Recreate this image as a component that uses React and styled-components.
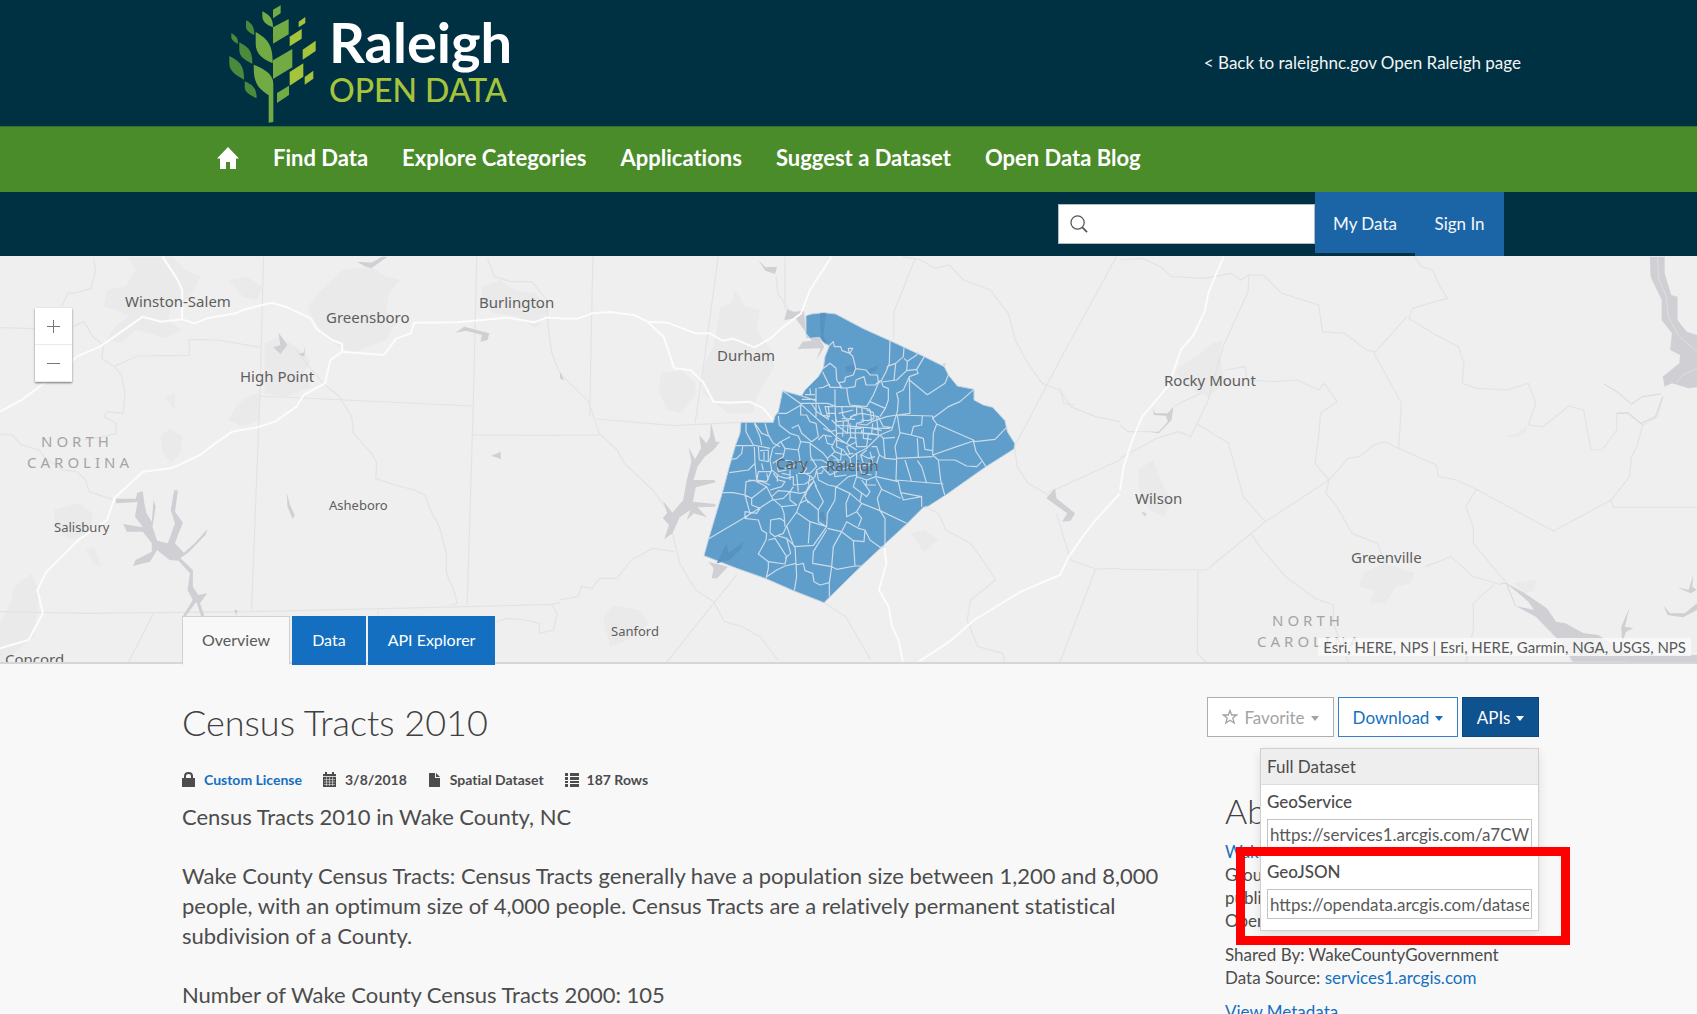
import React from "react";
import styled, { createGlobalStyle } from "styled-components";

const GlobalStyle = createGlobalStyle`
  *, *::before, *::after { box-sizing: border-box; }
  html, body { margin: 0; padding: 0; }
  body {
    background: #f8f8f8;
    color: #4c4c4c;
    font-family: Lato, "Open Sans", sans-serif;
    font-size: 16px;
    font-variant-ligatures: none;
    overflow: hidden;
  }
  a { color: #146fc0; text-decoration: none; }
  button, input { font-family: inherit; }
`;

const Page = styled.div`
  display: flex;
  flex-direction: column;
  height: 100vh;
  overflow: hidden;
`;

/* ---------- header ---------- */

const Brand = styled.header`
  display: flex;
  flex: none;
  align-items: center;
  justify-content: space-between;
  height: 126px;
  padding: 0 176px 0 228px;
  background: #003142;
`;

const LogoLink = styled.a`
  display: flex;
  gap: 12px;
  color: #fff;
`;

const LogoWords = styled.span`
  display: flex;
  flex-direction: column;
  padding-top: 8px;
`;

const LogoName = styled.span`
  font-size: 56px;
  font-weight: 700;
  line-height: 68px;
`;

const LogoTag = styled.span`
  color: #a6c33c;
  font-size: 32px;
  font-weight: 500;
  line-height: 28px;
`;

const BackLink = styled.a`
  padding-bottom: 2px;
  color: #f2f5f6;
  font-size: 17px;
`;

const MainNav = styled.nav`
  display: flex;
  flex: none;
  align-items: center;
  gap: 34px;
  height: 66px;
  padding: 0 217px 4px;
  background: #4a8c2a;
  border-top: 1px solid #2f7038;
`;

const NavLink = styled.a`
  display: flex;
  color: #fff;
  font-size: 22px;
  font-weight: 700;
`;

const Tools = styled.div`
  display: flex;
  flex: none;
  align-items: flex-start;
  justify-content: flex-end;
  height: 64px;
  padding-right: 193px;
  background: #003142;
`;

const SearchBox = styled.label`
  display: flex;
  align-items: center;
  gap: 8px;
  width: 257px;
  height: 40px;
  margin-top: 12px;
  padding-left: 11px;
  background: #fff;
  border: 1px solid #b3bcc0;
`;

const SearchInput = styled.input`
  flex: 1;
  min-width: 0;
  border: 0;
  outline: 0;
  background: transparent;
  font-size: 16px;
`;

const ToolLink = styled.a`
  display: flex;
  justify-content: center;
  width: ${(p) => p.$width}px;
  height: ${(p) => p.$height}px;
  background: #1b65a6;
  color: #f4f8fb;
  font-size: 17px;
  line-height: 64px;
`;

/* ---------- map ---------- */

const MapPanel = styled.section`
  position: relative;
  flex: none;
  height: 408px;
  overflow: hidden;
  background: #efefef;
  border-bottom: 2px solid #d6d6d6;
`;

const MapDrawing = styled.svg`
  display: block;
  width: 100%;
  height: 100%;

  path, polyline { vector-effect: non-scaling-stroke; }
  text {
    fill: #5e5e5e;
    font-family: "Noto Sans", "Open Sans", sans-serif;
    font-size: 15px;
  }
  .town { font-size: 13px; }
  .state { fill: #a4a4a6; letter-spacing: 4px; }
`;

const ZoomControl = styled.div`
  position: absolute;
  top: 52px;
  left: 35px;
  display: flex;
  flex-direction: column;
  width: 37px;
  background: #fff;
  box-shadow: 0 1px 2px #777;
`;

const ZoomButton = styled.button`
  display: flex;
  align-items: center;
  justify-content: center;
  height: 37px;
  padding: 0;
  border: 0;
  border-bottom: 1px solid #eaeaea;
  background: transparent;
  color: #777;
`;

const Attribution = styled.div`
  position: absolute;
  right: 6px;
  bottom: 6px;
  padding: 0 5px;
  background: rgba(250, 250, 250, 0.8);
  color: #5a5a5a;
  font-size: 15px;
  line-height: 18px;
`;

/* ---------- content ---------- */

const Content = styled.main`
  position: relative;
  z-index: 1;
  flex: 1;
  padding: 0 158px 0 182px;
`;

const Tabs = styled.nav`
  display: flex;
  gap: 2px;
  height: 49px;
  margin-top: -48px;
`;

const Tab = styled.a`
  display: flex;
  align-items: center;
  padding: 0 19px 2px;
  border: 1px solid ${(p) => (p.$active ? "#d0d0d0" : "#146fc0")};
  border-bottom-color: ${(p) => (p.$active ? "#f8f8f8" : "#146fc0")};
  background: ${(p) => (p.$active ? "#f8f8f8" : "#146fc0")};
  color: ${(p) => (p.$active ? "#5a5a5a" : "#fff")};
  font-size: 16px;
`;

const Columns = styled.div`
  display: flex;
  justify-content: space-between;
  padding-top: 32px;
`;

const Article = styled.article`
  width: 984px;
`;

const Title = styled.h1`
  margin: 0;
  color: #404040;
  font-size: 36px;
  font-weight: 300;
  line-height: 50px;
`;

const MetaList = styled.ul`
  display: flex;
  gap: 21px;
  margin: 23px 0 12px;
  padding: 0;
  list-style: none;
`;

const MetaItem = styled.li`
  display: flex;
  align-items: center;
  gap: 8px;
  font-size: 14px;
  font-weight: 700;
  line-height: 20px;
`;

const Text = styled.p`
  margin: 0 0 29px;
  font-size: 22px;
  line-height: 30px;
`;

const Side = styled.aside`
  position: relative;
  display: flex;
  flex-direction: column;
  width: 332px;
`;

const Actions = styled.div`
  display: flex;
  gap: 4px;
`;

const tones = {
  muted: { line: "#adadad", fill: "#fff", ink: "#a3a3a3" },
  outline: { line: "#3381c9", fill: "#fff", ink: "#146fc0" },
  solid: { line: "#0a4680", fill: "#0f5290", ink: "#fff" },
};

const ActionButton = styled.button`
  display: flex;
  align-items: center;
  justify-content: center;
  gap: 6px;
  width: ${(p) => p.$width}px;
  height: 40px;
  padding: 0;
  border: 1px solid ${(p) => tones[p.$tone].line};
  background: ${(p) => tones[p.$tone].fill};
  color: ${(p) => tones[p.$tone].ink};
  font-size: 17px;
`;

const Caret = styled.span`
  width: 0;
  height: 0;
  margin-top: 3px;
  border: 4px solid transparent;
  border-top: 5px solid currentColor;
  border-bottom: 0;
`;

const Menu = styled.div`
  position: absolute;
  top: 51px;
  right: 0;
  width: 279px;
  padding-bottom: 5px;
  background: #fff;
  border: 1px solid #cfcfcf;
  box-shadow: 0 4px 10px rgba(0, 0, 0, 0.1);
`;

const MenuHeading = styled.h3`
  margin: 0;
  padding: 0 6px;
  background: #eee;
  border-bottom: 1px solid #dedede;
  font-size: 17px;
  font-weight: 400;
  line-height: 35px;
`;

const Field = styled.label`
  display: block;
  padding: 0 6px;
  font-size: 17px;
  font-weight: 500;
  line-height: 34px;
`;

const FieldInput = styled.input`
  display: block;
  width: 100%;
  height: 30px;
  margin-bottom: 6px;
  padding: 0 2px;
  border: 1px solid #c4c4c4;
  outline: 0;
  color: #595959;
  font-size: 17px;
`;

const Highlight = styled.div`
  position: absolute;
  top: 98px;
  left: -25px;
  width: 334px;
  height: 98px;
  border: 9px solid #f00;
  pointer-events: none;
`;

const About = styled.div`
  padding: 49px 0 0 18px;
  font-size: 17px;
  line-height: 23px;
`;

const AboutTitle = styled.h2`
  margin: 0 0 4px;
  color: #404040;
  font-size: 34px;
  font-weight: 300;
  line-height: 50px;
`;

const AboutText = styled.p`
  margin: 0 0 11px;
`;

/* ---------- drawings ---------- */

const Tree = () => (
  <svg width="89" height="126" viewBox="84 0 267 378" aria-hidden="true">
    <g fill="#72aa44">
      <path d="M206 368V286C172 262 161 250 161 194C200 210 220 226 220 252V366Z" />
      <path d="M167 96C204 118 218 134 218 190C186 176 167 162 167 130Z" />
      <path d="M187 34C210 46 219 56 219 82C198 74 187 64 187 48Z" />
      <path d="M219 29L242 16V40L219 55Z" />
      <path d="M219 82L266 57V103L219 131Z" />
      <path d="M219 181L277 147V202L219 237Z" />
      <path d="M231 279L267 257V285L231 309Z" />
    </g>
    <g fill="#4b8a3c">
      <path d="M138 61C154 70 163 77 163 105C147 98 138 92 138 78Z" />
      <path d="M94 99C110 110 114 114 114 132C100 124 94 118 94 110Z" />
      <path d="M118 127C146 143 157 151 157 192C132 178 118 170 118 150Z" />
      <path d="M88 168C120 185 132 196 132 239C104 224 88 212 88 190Z" />
      <path d="M134 244C160 256 170 266 170 295C148 284 134 276 134 260Z" />
    </g>
    <g fill="#a6c33c">
      <path d="M296 65L316 51V69L296 82Z" />
      <path d="M269 110L305 87V116L269 139Z" />
      <path d="M308 149L347 122V153L308 179Z" />
      <path d="M269 216L310 190V230L269 257Z" />
      <path d="M314 231L340 212V236L314 254Z" />
    </g>
  </svg>
);

const HomeIcon = () => (
  <svg width="22" height="22" viewBox="0 0 22 22" fill="#fff" role="img" aria-label="Home">
    <path d="M11 0L22 11.5H19V22H13V15H9V22H3V11.5H0Z" />
  </svg>
);

const SearchIcon = () => (
  <svg width="18" height="18" viewBox="0 0 19 19" fill="none" stroke="#555" strokeWidth="1.3" aria-hidden="true">
    <circle cx="8" cy="8" r="7" />
    <path d="M13 13L18 18" strokeWidth="1.8" />
  </svg>
);

const StarIcon = () => (
  <svg width="16" height="16" viewBox="0 0 16 16" fill="none" stroke="currentColor" strokeWidth="1.3" aria-hidden="true">
    <path d="M8 1.5L9.7 6H14.6L10.8 9.1L12.2 14L8 11.2L3.8 14L5.2 9.1L1.4 6H6.3Z" />
  </svg>
);

const icons = {
  lock: (
    <>
      <path d="M0 6H13V15H0Z" />
      <path d="M3 7V4Q3 1 6.500 1T10 4V7" fill="none" stroke="#4c4c4c" strokeWidth="2" />
    </>
  ),
  calendar: (
    <>
      <path d="M0 2H13V15H0Z" />
      <path d="M2 0H4V3H2ZM9 0H11V3H9Z" />
      <path d="M0 4.500H13" stroke="#f8f8f8" strokeWidth="0.8" />
      <path d="M1 7.500H12M1 10H12M1 12.500H12M3.500 5V14M6.500 5V14M9.500 5V14" stroke="#f8f8f8" strokeWidth="0.5" />
    </>
  ),
  file: <path d="M1 1H7V6H12V15H1ZM8 1L12 5H8Z" />,
  rows: <path d="M0 1H3V4H0ZM5 1H14V4H5ZM0 5H3V8H0ZM5 5H14V8H5ZM0 9H3V11H0ZM5 9H14V11H5ZM0 12H3V15H0ZM5 12H14V15H5Z" />,
};

const MetaIcon = ({ name }) => (
  <svg width="14" height="16" viewBox="0 0 14 16" fill="#4c4c4c" aria-hidden="true">
    {icons[name]}
  </svg>
);

const WEST = {
  urban: [
    "M360 20L480 20L520 60L560 80L545 120L520 150L480 160L470 210L510 240L460 265L420 250L380 240L340 280L300 270L320 230L360 200L330 180L290 170L300 120L350 110L380 60Z",
    "M640 90L690 80L735 110L720 150L680 140Z",
    "M960 60L1040 50L1080 80L1120 90L1090 130L1080 180L1110 220L1080 270L1030 290L990 310L950 290L910 260L880 210L860 170L900 120Z",
    "M740 280L780 260L830 290L870 330L850 370L870 410L800 440L740 430Z",
    "M690 440L725 430L725 510L680 530L640 510L660 470Z",
    "M450 560L475 535L510 560L505 610L480 640L455 610Z",
    "M1350 110L1400 90L1440 120L1500 130L1540 180L1500 235L1450 200L1380 190L1350 150Z",
    "M150 780L220 760L260 790L250 850L200 870L160 840Z",
    "M40 1010L90 970L110 1030L105 1090L95 1160L50 1200L0 1240L0 1120L30 1060Z",
    "M240 900L262 890L284 950L262 940Z",
    "M460 440L490 430L490 480Z",
  ],
  lines: [
    "M738 20L728 430L704 1085", "M1335 20L1325 470L1308 1065", "M728 438L1323 468", "M1325 555L1568 556",
    "M0 1085L240 1090L704 1085L1308 1070L1545 1063L1568 1058", "M430 1090L360 1235", "M0 233L95 236",
    "M318 350L385 318L530 316L530 268L610 270L728 292", "M1058 1075L1058 1240",
    "M262 25L268 60L255 115L215 128L190 130L172 170", "M205 230L235 215L260 260L290 285L285 325L320 350L340 375L350 430L345 490L300 485L292 500L325 520L325 550L290 560L235 570",
    "M0 552L35 555L60 585L110 600L130 630L150 640L175 660L215 665L240 690L250 725L320 750",
    "M830 300L850 330L905 400L950 440L985 500L990 550L1040 610L1055 640L1052 685L1105 705L1160 720L1190 735L1205 780L1230 830L1250 910L1250 970L1272 1025L1280 1060L1260 1065",
    "M1365 25L1385 80L1430 95L1490 95L1530 150L1535 230L1545 310L1568 370",
    "M1390 1115L1420 1105L1470 1110L1510 1120L1510 1150L1550 1140L1560 1090L1545 1065",
  ],
  roads: [
    "M0 485L60 450L130 395L215 320L280 290L340 245L400 200L450 215L510 208L545 220L580 205L660 190L680 180L760 158L800 170L870 205L885 235L930 270L958 282L958 305L1075 315L1110 265L1150 250L1160 218L1280 217L1420 203L1495 217L1530 203L1568 204",
    "M455 20L495 85L510 120L510 208", "M958 305L925 330L910 400L850 435L830 470L770 515L720 532L650 545L590 590L560 615L480 655L400 665L320 745L300 810L220 870L130 965L105 1020L120 1090L80 1170L0 1195",
  ],
  water: [
    "M325 746L380 746L385 728L400 724L404 760L410 790L425 815L430 750L436 770L427 830L440 872L470 880L480 850L490 820L478 780L488 720L498 722L490 785L512 818L500 850L490 880L515 908L545 880L582 836L575 855L530 905L505 925L540 960L540 1010L555 1035L580 1030L560 1060L572 1098L563 1098L550 1055L520 1098L512 1098L540 1050L525 1020L532 970L500 932L475 930L440 900L420 935L372 948L380 930L425 905L425 880L400 845L355 845L345 822L400 832L378 800L385 756L325 760Z",
    "M1000 35L1040 38L1070 20L1085 20L1040 55L1020 48Z",
    "M1275 248L1300 230L1370 250L1365 270L1345 275L1350 255L1305 242Z",
    "M780 248L805 285L785 312L765 292L785 285Z", "M855 288L852 320L835 312L850 308Z", "M803 728L812 765L825 795L820 808L805 770Z",
    "M1375 618L1402 605L1402 628L1390 622Z", "M656 1080L664 1080L662 1098Z",
  ],
};

const CENTRE = {
  urban: [
    "M450 170L480 160L490 120L520 170L560 180L550 240L590 300L600 350L550 440L540 490L470 490L400 430L400 350L430 290Z",
    "M285 370L340 360L380 400L380 430L340 490L300 480L275 420Z",
    "M980 850L1020 840L1060 870L1020 905Z", "M120 1100L150 1065L220 1080L250 1120L190 1170L140 1190Z",
  ],
  lines: [
    "M92 20L83 500", "M443 20L400 360L378 520", "M630 20L630 180", "M105 507L320 527L505 517", "M0 555L110 555",
    "M995 25L935 185L934 270", "M1558 20L1400 330L1273 590", "M1368 728L1568 630", "M1390 790L1430 930L1500 957L1568 955M1500 957L1400 1235",
    "M495 975L430 1060L300 1235", "M0 370L80 455L110 550L160 600L180 640L260 720L300 780L335 940L380 1020L430 1055L460 1115L510 1130L560 1160L610 1230",
    "M0 1050L50 1040L60 1010L90 1015L110 985L160 985L200 930L260 895L320 905",
    "M960 20L1010 30L1050 55L1090 45L1130 90L1205 120L1255 190L1275 270L1310 340L1350 400L1400 420L1430 470L1500 500L1568 515",
    "M1400 415L1410 460L1440 465", "M1273 590L1280 650L1310 700L1368 735", "M740 1058L800 1100L870 1230",
    "M1020 770L1060 790L1080 840L1150 880L1190 940L1220 990L1150 1050L1140 1110L1170 1190L1240 1210L1245 1235", "M605 80L610 130L640 180",
  ],
  roads: [
    "M0 206L50 206L90 190L140 186L210 196L245 215L300 218L380 250L420 250L455 272L485 266L545 292L590 265L620 235L675 190L700 120L760 20",
    "M245 215L290 260L320 355L365 360L400 395L430 455L470 458L530 455L570 475L595 510",
    "M908 890L914 940L893 1020L920 1070L930 1130L948 1170L960 1235", "M1005 1235L1090 1175L1160 1110L1290 1025L1400 975L1425 920L1470 850L1500 810L1568 730",
  ],
  water: [
    "M423 520L436 575L448 576L430 600L405 620L385 650L374 690L432 690L436 697L380 712L372 755L435 762L435 770L385 772L412 802L375 790L355 810L365 780L335 802L315 850L292 868L305 825L288 805L300 788L288 752L315 788L345 750L355 690L368 635L360 592L378 628L395 595L390 555L410 580L420 560Z",
    "M628 210L636 178L655 185L683 182L690 265L725 262L740 290L718 330L730 295L665 297L680 275L705 272L660 205Z",
    "M415 935L470 950L440 985L425 985L430 955Z", "M555 30L575 52L608 50L602 72L575 62Z",
    "M1362 745L1386 715L1390 745L1442 790L1430 812L1406 815L1420 790Z", "M1070 342L1080 340L1078 348Z", "M0 365L12 392L0 385Z",
  ],
};

const EAST = {
  urban: [
    "M160 350L220 310L250 280L280 270L270 310L280 370L285 400L240 440L200 420L150 370Z",
    "M50 660L90 630L110 690L140 750L120 800L80 780L50 720Z",
    "M660 970L720 940L800 970L790 1000L750 1010L720 1060L680 1060L690 1020L650 1010Z",
    "M1035 562L1080 550L1105 525L1105 545L1080 562Z", "M1070 1000L1130 990L1125 1020L1100 1030Z",
  ],
  lines: [
    "M350 75L348 125L280 290L240 450L192 560L160 545L100 565L0 625", "M210 522L295 580L335 740L395 815L235 960L0 958", "M212 960L210 1210L235 1238",
    "M395 815L568 690", "M780 200L690 310L765 460L757 595L860 645L865 680L915 690L968 718L1178 843L1335 750L1340 772L1568 772",
    "M800 20L820 50L850 60L865 100L890 145L855 155L795 175L785 205L850 250L920 290L935 340L930 400L970 415L1050 420L1110 400L1130 460L1110 525L1150 530L1220 468L1260 480L1280 600L1310 600L1350 540L1350 490L1380 490L1420 525L1460 500L1475 440",
    "M0 30L60 25L110 50L140 80L230 85L300 70L330 90L350 75L390 75L440 130L540 165L550 245L610 250L670 300L690 305",
    "M285 360L340 350L345 390L420 395L480 390L540 420L555 400L590 455L545 490L540 560L530 640L568 690L560 730L590 770L630 850L700 880L720 940",
    "M568 690L620 625L650 620L690 585L720 575L757 595", "M355 850L380 890L450 980L530 1045L580 1065L580 1120L620 1238",
    "M830 950L900 920L960 980L1040 1005", "M968 718L940 770L960 830L960 880L990 920L1035 980L1060 1010", "M1015 1005L960 1060L960 1140L940 1238",
    "M1420 525L1405 590L1390 620L1385 680L1335 750", "M0 525L20 545L90 545", "M145 470L180 450L220 430",
  ],
  roads: ["M282 20L262 70L240 130L230 185L200 255L165 300L150 350L130 410L60 500L30 580L10 650L0 720"],
  water: [
    "M1440 20L1480 20L1480 70L1498 135L1515 140L1515 210L1540 245L1568 255L1568 412L1545 415L1500 400L1480 410L1475 380L1520 340L1522 315L1495 300L1500 250L1472 210L1472 150L1442 80Z",
    "M1050 1000L1100 1030L1160 1075L1185 1115L1210 1120L1260 1150L1300 1155L1320 1170L1420 1235L1230 1235L1200 1180L1130 1100L1075 1068L1125 1080L1110 1055Z",
    "M1384 1075L1372 1130L1395 1135L1375 1145L1365 1180L1362 1130Z", "M1477 1068L1495 1090L1535 1090L1568 1060L1568 1080L1530 1102L1488 1095Z",
    "M1345 1215L1568 1215L1568 1238L1380 1238Z", "M1515 1012L1545 1020L1558 975L1555 1010L1568 1020L1550 1030Z",
    "M90 475L95 490L130 490L145 470L140 510L105 550L80 545L105 545L130 515L125 497L92 495Z", "M58 785L72 790L68 800Z",
  ],
};

/* Pale channel lines drawn over the sound in the north-east corner. */
const CHANNELS = "M1460 20L1465 90L1485 140L1490 200L1520 260L1568 305M1568 355L1530 375L1510 400";

/* Narrow creeks that reach inland from the sound. */
const CREEKS = "M1315 402L1350 425L1390 462L1420 440L1470 432M1350 490L1380 488L1415 520L1455 500L1475 440M1075 1068L1050 1000L1035 1000";

const COUNTY =
  "M348 47L365 42L402 38L437 42L520 86L600 122L703 170L763 200L775 225L802 258L852 268L852 300L880 315L908 322L945 362L952 395L974 430L972 447L888 500L766 586L716 618L700 622L650 672L585 732L514 798L402 908L310 872L228 836L140 805L42 767L56 716L98 575L118 500L137 435L150 400L153 367L250 367L255 348L265 335L278 272L335 288L345 270L385 230L400 205L405 170L418 137L402 130L388 112L360 115L348 100Z";

const LAKES =
  "M390 40L408 40L400 110L415 130L395 120L390 80ZM465 200L490 195L500 215L470 215ZM530 210L565 195L560 210L535 222ZM90 770L110 730L115 760L160 725L155 745L118 780L80 790ZM385 640L400 635L408 665L395 660Z";

const TRACTS = [
  "M418 137L430 125L433 140L452 140L456 152L480 160L488 145L475 145L478 160L488 168L494 190L497 206L528 210L540 225L562 225L565 245L574 242",
  "M600 122L598 190L588 215L574 242L565 250", "M642 142L640 170L617 190L590 200", "M642 175L652 184L680 165L684 155", "M703 170L680 208L650 212L620 240L574 246",
  "M617 190L612 240", "M652 184L650 212", "M680 208L684 220L658 230L640 270L620 280L625 300L622 335L605 390L570 405",
  "M400 205L420 190L438 205L440 240L455 262L448 262L420 262L398 215", "M497 206L490 225L466 232L464 245L448 248L452 264L470 264L495 260L498 240L522 230L528 255L555 255L565 246",
  "M385 264L400 262L418 253L420 262", "M378 264L378 350", "M335 288L378 302M335 298L378 298M345 284L375 284M360 265L362 286", "M278 272L330 310L405 378L440 412L500 450",
  "M332 310L412 310L440 320L500 320L540 328", "M265 340L290 340L332 316L332 345L350 345L360 365L378 370L385 410L365 425L335 400L325 375L305 385",
  "M265 348L268 375L300 400L325 408L332 425L360 428", "M435 268L435 315L440 410", "M470 264L475 300L480 315L530 320L550 285L565 250",
  "M574 246L580 260L595 265L595 300L586 325L540 305", "M658 232L660 340L622 345", "M658 240L712 284L765 250L775 225",
  "M852 268L810 305L775 320L728 355L740 372L850 420L855 425L915 418L952 380", "M728 355L728 348L620 345", "M740 372L730 400L728 465",
  "M697 348L695 375L670 380L664 405L700 415L705 448L728 452", "M728 465L800 440L850 423", "M850 423L858 455L875 480L888 500", "M745 480L795 480L830 498L860 500L875 485",
  "M728 465L745 480L752 540L764 585", "M622 345L630 400L615 440L620 475L728 470", "M630 398L664 405", "M682 415L685 470", "M570 405L580 415L615 412", "M580 415L585 475L620 478",
  "M620 478L618 540L760 552", "M645 480L665 545M682 482L695 500L710 550", "M558 530L625 545L632 578L695 590L695 620",
  "M632 578L640 600L695 590", "M365 312L380 335L415 358L405 320L430 320", "M412 340L435 340L440 365L475 362L490 345L515 340L540 345L565 350L580 380L605 382",
  "M455 320L458 345L475 365L472 400L440 375L425 360", "M500 320L500 345L480 350M515 322L520 365L500 370L495 400", "M540 328L545 365L530 375L505 372M548 370L545 400",
  "M545 365L590 350L620 345", "M530 330L550 338L552 355L535 362L512 360", "M560 350L565 405L520 400", "M586 325L570 350", "M440 375L495 380L560 385L600 385", "M440 400L480 398L540 400L570 405",
  "M480 370L482 410L470 430L440 420", "M495 400L500 440L530 440L535 400M500 415L482 412", "M515 390L515 400M460 365L458 410", "M570 405L530 445L500 460L480 475L460 450L440 440L440 412",
  "M545 440L560 440L568 465L585 475M530 450L512 465L520 490L560 490L568 465", "M440 412L425 440L435 455L412 475L400 460L360 430", "M435 455L460 465L490 460M455 445L452 480L430 480",
  "M480 475L485 500L540 495M500 460L500 530L530 540L558 530L560 490", "M412 475L420 500L395 500L380 510L385 540L415 555L440 560L475 530L500 525", "M425 410L400 405L385 420",
  "M360 428L362 470L380 500L360 520L325 520", "M332 425L325 450L285 445L272 425L300 410", "M325 450L330 480L310 500L280 505M285 445L280 470L248 490",
  "M272 425L248 445L240 480L245 510L270 530L290 535L310 530L310 555L345 552L375 530L380 510", "M168 370L168 395L190 435L240 445M193 370L210 410L215 435M225 370L235 405L250 430",
  "M193 367L215 400L240 410", "M137 437L190 437M193 440L195 490L175 510L118 518M158 440L155 460L140 475L125 478", "M205 440L208 480L235 485L235 450L210 452M222 455L222 480",
  "M195 490L200 540L230 545L245 510M175 540L215 545L240 555M98 578L130 578L165 585L168 545L195 540", "M165 585L185 595L230 560L245 590L265 572L300 575L310 560", "M245 590L250 600L280 595L300 575L330 580L350 575L370 545",
  "M230 560L200 545L205 515L245 515M250 520L265 540L285 545L275 560L240 570M262 525L262 545M300 510L300 540", "M185 595L185 615L210 625L200 640L165 635L165 655L180 640L165 585",
  "M56 716L160 655L250 598L275 620L282 640L285 680", "M165 655L205 660L215 690L230 700L228 720L205 762L235 785L235 805L228 836",
  "M240 698L242 660L270 655L285 665M240 698L255 710L280 700L290 678L320 636L330 610L355 560L370 545", "M235 785L285 792L290 770L255 715L235 720M285 775L302 760L290 715L265 708", "M290 715L315 740L318 790L285 798L260 810L228 832",
  "M318 790L320 830L313 872M318 795L340 790L345 812L368 820L372 845L390 855L418 848L418 890", "M290 678L312 740L370 736L410 680L360 665L318 636", "M360 665L355 730M410 680L412 640L435 600L437 560",
  "M375 555L400 605L385 630L385 665L410 680M330 610L350 600L385 630M355 560L345 590L355 610M300 575L300 600L320 615L275 620", "M410 690L370 755L368 790L425 800L440 808L495 798L515 798", "M425 800L418 848M425 800L430 740L455 695L412 685",
  "M455 695L490 722L495 798M490 722L522 725L525 690L505 685L470 665L455 695M525 690L540 720L570 742L585 740", "M437 560L480 580L515 610L570 632L650 670", "M570 632L585 655L585 732M570 632L562 595L575 568L632 595M575 568L558 535",
  "M480 580L468 610L470 650L500 635L515 610M500 635L515 655L505 680M500 530L490 560L515 580L510 605M515 540L540 575L530 590L510 575M530 540L528 555L558 555", "M360 525L355 555M345 520L365 530L380 560M320 522L325 575M385 520L395 520L400 510",
  "M360 480L395 480L412 490M395 500L420 525L450 510L480 500",
  "M385 315L395 345L420 350M415 320L418 350M445 340L470 335L490 330M455 355L495 358M478 385L515 385M520 380L520 415L545 418M545 385L575 392M500 425L470 440L480 462",
  "M400 385L420 395L440 390M405 405L412 430L430 435M425 465L440 475L450 495M455 490L470 480M515 465L535 475L555 470M540 455L548 485M510 500L515 520L545 525M430 500L435 530L470 525",
  "M250 430L270 440M255 460L280 462M260 485L265 515L290 510M285 480L310 485M230 520L235 540M275 520L300 525M330 490L350 505L340 520M215 490L220 510",
];

const LABELS = [
  [125, 51, "Winston-Salem"], [326, 67, "Greensboro"], [479, 52, "Burlington"], [240, 126, "High Point"], [717, 105, "Durham"],
  [1164, 130, "Rocky Mount"], [1135, 248, "Wilson"], [1351, 307, "Greenville"], [776, 213, "Cary"], [826, 215, "Raleigh"],
  [329, 254, "Asheboro", "town"], [54, 276, "Salisbury", "town"], [611, 380, "Sanford", "town"], [5, 409, "Concord"],
  [41, 191, "NORTH", "state"], [27, 212, "CAROLINA", "state"], [1272, 370, "NORTH", "state"], [1257, 391, "CAROLINA", "state"],
];

const Terrain = ({ data, transform }) => (
  <g transform={transform} fill="none" strokeLinejoin="round">
    <path d={data.urban.join("")} fill="#eaeaea" />
    <path d={data.lines.join("")} stroke="#e3e3e5" strokeWidth="1.2" />
    <path d={data.water.join("")} fill="#cfcfd4" />
    <path d={data.roads.join("")} stroke="#fcfcfc" strokeWidth="2" />
  </g>
);

const RegionMap = () => (
  <MapDrawing viewBox="0 0 1697 406" preserveAspectRatio="xMidYMin slice" role="img" aria-label="Map of Wake County census tracts">
    <Terrain data={WEST} transform="translate(0 -6) scale(0.35714 0.33333)" />
    <Terrain data={CENTRE} transform="translate(560 -6) scale(0.35714 0.33333)" />
    <Terrain data={EAST} transform="translate(1120 -6) scale(0.36798 0.33333)" />
    <g transform="translate(1120 -6) scale(0.36798 0.33333)" fill="none">
      <path d={CHANNELS} stroke="#dedee2" />
      <path d={CREEKS} stroke="#d8d8dc" />
    </g>
    <g transform="translate(690 44) scale(0.33333)" fill="none" strokeLinejoin="round">
      <path d={COUNTY} fill="#5f9dcb" stroke="#c3d5e2" strokeWidth="1" />
      <path d={LAKES} fill="#5792c1" />
      <path d={TRACTS.join("")} stroke="#cbdce8" strokeWidth="1.2" />
    </g>
    {LABELS.map(([x, y, name, kind]) => (
      <text key={`${name}-${x}`} x={x} y={y} className={kind}>
        {name}
      </text>
    ))}
  </MapDrawing>
);

/* ---------- page ---------- */

const NAV = ["Find Data", "Explore Categories", "Applications", "Suggest a Dataset", "Open Data Blog"];

export default function App() {
  return (
    <Page>
      <GlobalStyle />
      <Brand>
        <LogoLink href="#">
          <Tree />
          <LogoWords>
            <LogoName>Raleigh</LogoName>
            <LogoTag>OPEN DATA</LogoTag>
          </LogoWords>
        </LogoLink>
        <BackLink href="#">&lt; Back to raleighnc.gov Open Raleigh page</BackLink>
      </Brand>
      <MainNav>
        <NavLink href="#"><HomeIcon /></NavLink>
        {NAV.map((name) => (
          <NavLink href="#" key={name}>{name}</NavLink>
        ))}
      </MainNav>
      <Tools>
        <SearchBox>
          <SearchIcon />
          <SearchInput type="text" aria-label="Search" />
        </SearchBox>
        <ToolLink href="#" $width={100} $height={61}>My Data</ToolLink>
        <ToolLink href="#" $width={89} $height={64}>Sign In</ToolLink>
      </Tools>

      <MapPanel>
        <RegionMap />
        <ZoomControl>
          <ZoomButton type="button" aria-label="Zoom in">
            <svg width="13" height="13" viewBox="0 0 13 13" stroke="currentColor"><path d="M6.500 0V13M0 6.500H13" /></svg>
          </ZoomButton>
          <ZoomButton type="button" aria-label="Zoom out">
            <svg width="13" height="13" viewBox="0 0 13 13" stroke="currentColor"><path d="M0 6.500H13" /></svg>
          </ZoomButton>
        </ZoomControl>
        <Attribution>Esri, HERE, NPS | Esri, HERE, Garmin, NGA, USGS, NPS</Attribution>
      </MapPanel>

      <Content>
        <Tabs>
          <Tab href="#" $active>Overview</Tab>
          <Tab href="#">Data</Tab>
          <Tab href="#">API Explorer</Tab>
        </Tabs>
        <Columns>
          <Article>
            <Title>Census Tracts 2010</Title>
            <MetaList>
              <MetaItem><MetaIcon name="lock" /><a href="#">Custom License</a></MetaItem>
              <MetaItem><MetaIcon name="calendar" />3/8/2018</MetaItem>
              <MetaItem><MetaIcon name="file" />Spatial Dataset</MetaItem>
              <MetaItem><MetaIcon name="rows" />187 Rows</MetaItem>
            </MetaList>
            <Text>Census Tracts 2010 in Wake County, NC</Text>
            <Text>
              Wake County Census Tracts: Census Tracts generally have a population size between 1,200 and 8,000
              people, with an optimum size of 4,000 people. Census Tracts are a relatively permanent statistical
              subdivision of a County.
            </Text>
            <Text>Number of Wake County Census Tracts 2000: 105</Text>
          </Article>
          <Side>
            <Actions>
              <ActionButton type="button" $tone="muted" $width={127}><StarIcon />Favorite<Caret /></ActionButton>
              <ActionButton type="button" $tone="outline" $width={120}>Download<Caret /></ActionButton>
              <ActionButton type="button" $tone="solid" $width={77}>APIs<Caret /></ActionButton>
            </Actions>
            <About>
              <AboutTitle>About</AboutTitle>
              <AboutText>
                <a href="#">Wake</a><br />Group<br />public<br />Open
              </AboutText>
              <AboutText>
                Shared By: WakeCountyGovernment<br />
                Data Source: <a href="#">services1.arcgis.com</a>
              </AboutText>
              <a href="#">View Metadata</a>
            </About>
            <Menu>
              <MenuHeading>Full Dataset</MenuHeading>
              <Field>
                GeoService
                <FieldInput readOnly value="https://services1.arcgis.com/a7CWfuGP5ZnLYE7I/arcgis/rest/services" />
              </Field>
              <Field>
                GeoJSON
                <FieldInput readOnly value="https://opendata.arcgis.com/datasets/census-tracts-2010.geojson" />
              </Field>
              <Highlight />
            </Menu>
          </Side>
        </Columns>
      </Content>
    </Page>
  );
}
